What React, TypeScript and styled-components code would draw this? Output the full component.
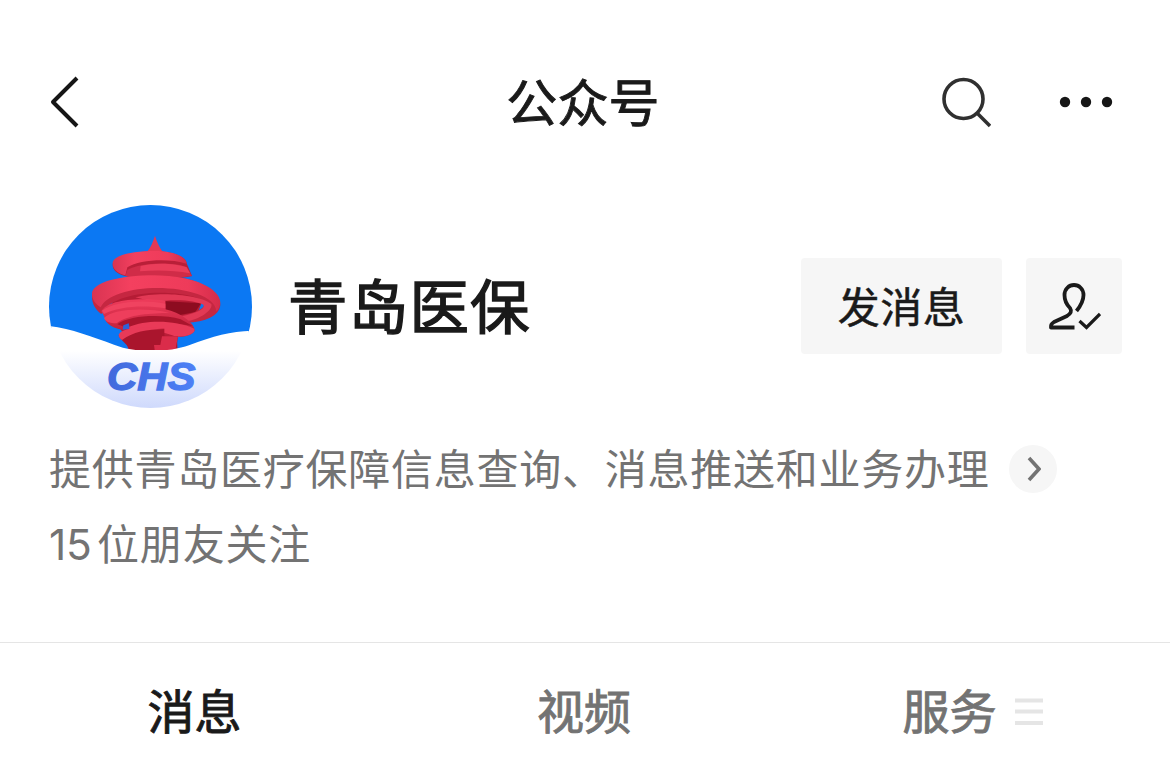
import React from "react";
import styled, { createGlobalStyle } from "styled-components";

const Global = createGlobalStyle`
  * { box-sizing: border-box; }
  body { margin: 0; background: #fff; font-family: "Noto Sans CJK SC", sans-serif; }
`;

const Page = styled.main`
  width: 1170px;
  height: 763px;
  overflow: hidden;
  background: #fff;
  display: flex;
  flex-direction: column;
`;

const NavBar = styled.header`
  height: 205px;
  flex: none;
  padding: 0 57px 2px 48px;
  display: grid;
  grid-template-columns: 1fr 152px 1fr;
  column-gap: 4px;
  align-items: center;
`;

const Label = styled.span<{ $size: number; $track?: number; $stroke?: number; $color?: string; $lift?: number }>`
  display: block;
  font-size: ${(p) => p.$size}px;
  line-height: 1.2;
  padding-bottom: ${(p) => (p.$lift ?? 0) * 2}px;
  letter-spacing: ${(p) => p.$track ?? 0}px;
  color: ${(p) => p.$color ?? "#1a1a1a"};
  -webkit-text-stroke: ${(p) => p.$stroke ?? 0}px currentColor;
  white-space: nowrap;
`;

const Title = styled.div`
  display: flex;
  justify-content: center;
  margin: 0 -8px 0 -3px;
`;

const Count = styled.span`
  font-family: Inter, "Liberation Sans", sans-serif;
  font-size: 42.5px;
  letter-spacing: -0.3px;
  margin-right: 5.5px;
`;

const NavActions = styled.div`
  display: flex;
  justify-content: flex-end;
  align-items: center;
  gap: 68px;
`;

const Icon = styled.svg`
  display: block;
  flex: none;
`;

const Profile = styled.section`
  height: 203px;
  flex: none;
  padding: 0 48px 0 49px;
  display: flex;
  align-items: center;
`;

const Name = styled.h1`
  margin: 0 auto 0 36px;
  font-weight: 400;
  display: flex;
`;

const Button = styled.button<{ $width: number }>`
  width: ${(p) => p.$width}px;
  height: 96px;
  margin: 0 0 2px 24px;
  padding: 0;
  border: 0;
  border-radius: 4px;
  background: #f6f6f6;
  font-family: inherit;
  display: flex;
  align-items: center;
  justify-content: center;
`;

const Details = styled.section`
  height: 234px;
  flex: none;
  padding: 24px 49px 0;
`;

const DetailRow = styled.div`
  height: 75px;
  display: flex;
  align-items: center;
`;

const More = styled.span`
  width: 48px;
  height: 48px;
  margin: 0 0 1px 19px;
  border-radius: 50%;
  background: #f6f6f6;
  display: flex;
  align-items: center;
  justify-content: center;
`;

const Tabs = styled.nav`
  flex: 1;
  border-top: 1px solid #e5e5e5;
  display: grid;
  grid-template-columns: 389px 390px 387px;
`;

const Tab = styled.div`
  height: 138px;
  display: flex;
  align-items: center;
  justify-content: center;
  gap: 18px;
`;

const Logo = () => (
  <Icon width="203" height="203" viewBox="27 30 609 609">
    <defs>
      <clipPath id="disc"><circle cx="331.5" cy="334.5" r="304.5" /></clipPath>
      <linearGradient id="snow" x1="0" y1="0" x2="0" y2="1">
        <stop offset="0.3" stopColor="#fff" />
        <stop offset="1" stopColor="#cdd8fc" />
      </linearGradient>
      <linearGradient id="band" x1="0" y1="0" x2="1" y2="0">
        <stop offset="0" stopColor="#d93452" />
        <stop offset="0.3" stopColor="#f4405f" />
        <stop offset="0.75" stopColor="#ee3b5a" />
        <stop offset="1" stopColor="#d42c4a" />
      </linearGradient>
      <linearGradient id="shade" x1="0" y1="0" x2="0" y2="1">
        <stop offset="0" stopColor="#ee3c5b" />
        <stop offset="1" stopColor="#b81c36" />
      </linearGradient>
      <linearGradient id="mark" x1="0" y1="0" x2="1" y2="0">
        <stop offset="0" stopColor="#4169dc" />
        <stop offset="1" stopColor="#4d80f6" />
      </linearGradient>
    </defs>
    <g clipPath="url(#disc)">
      <path d="M20 20H645V409L575 418L447 465H222L140 425L20 394Z" fill="#0b78f3" />
      <g transform="translate(138 105)">
        {/* spire and upper disc */}
        <path d="M207 17C212 34 221 54 231 67H182C194 53 201 36 207 17Z" fill="#e33955" />
        <path d="M80 104C80 80 138 64 207 64C264 64 302 82 302 100L318 138C270 150 160 150 118 138C94 132 80 120 80 104Z" fill="#b91f38" />
        <path d="M80 100C80 76 138 63 207 63C266 63 302 82 302 101C250 84 160 88 124 112L118 136C94 130 80 118 80 100Z" fill="url(#band)" />
        <path d="M124 120C160 98 256 94 302 111L318 138C260 148 160 148 118 138Z" fill="#d02c48" />
        <path d="M164 108C210 97 268 100 302 112L312 130C265 121 210 120 162 124Z" fill="#ea3d5a" />
        {/* core below the main ring */}
        <path d="M98 192L250 180L352 205L335 250L270 285L275 360H128L112 310L62 240Z" fill="#b51c35" />
        <path d="M238 214L345 220L328 246L278 256L240 240Z" fill="#8d0c20" />
        {/* main ring */}
        <path fillRule="evenodd" d="M18 200C18 163 98 136 206 136C326 136 403 178 403 224C401 258 356 276 303 278L276 258C330 250 358 234 354 221C346 200 290 188 222 188C146 188 80 208 58 236L46 252C30 240 18 222 18 200Z" fill="#c52741" />
        <path d="M18 192C18 158 98 136 206 136C326 136 403 178 403 218C402 228 398 238 391 244C389 199 302 174 214 174C132 174 60 196 44 232C28 222 18 208 18 192Z" fill="url(#band)" />
        <path d="M148 202C214 184 340 192 376 222C382 240 340 270 298 274L276 260C330 252 360 236 352 224C330 212 270 205 205 216Z" fill="#e23955" />
        {/* descending discs */}
        <path d="M46 244C62 212 146 200 238 212V238C282 248 326 278 326 302C318 316 292 322 270 320L128 300C86 302 56 280 56 262Z" fill="url(#shade)" />
        <path d="M48 242C82 216 170 208 238 221V235C170 224 96 230 54 252Z" fill="#f04360" />
        <path d="M54 264C80 235 180 232 250 248C198 250 126 252 92 280C70 280 58 274 54 264Z" fill="#ee3e5c" />
        <path d="M94 283C130 255 230 252 284 268L320 288C250 276 176 274 124 294Z" fill="#aa152d" />
        <path d="M112 286L128 280L132 296L110 299Z" fill="#2e62d6" />
        <path d="M130 290C176 270 266 268 325 296C330 310 306 320 270 320C230 300 160 300 130 304Z" fill="#e93a58" />
        <path d="M98 316C108 296 166 290 235 296V320L276 318L270 360H130C128 344 104 334 98 316Z" fill="#aa152d" />
        <path d="M98 314C106 294 174 286 236 297C182 298 140 306 108 330C102 326 98 320 98 314Z" fill="#e83a58" />
        <path d="M228 319H276L268 360H206L204 345H223Z" fill="#da2c4a" />
      </g>
      <path d="M20 392C96 401 150 423 222 449C294 477 391 471 447 451C524 421 575 409 645 407V645H20Z" fill="url(#snow)" />
      <text x="201" y="584" fontFamily="Liberation Sans, Arial, sans-serif" fontSize="119" fontWeight="700" fontStyle="italic" textLength="265" lengthAdjust="spacingAndGlyphs" fill="url(#mark)" stroke="url(#mark)" strokeWidth="4">CHS</text>
    </g>
  </Icon>
);

export default function App() {
  return (
    <>
      <Global />
      <Page>
        <NavBar>
          <Icon width="32" height="54" viewBox="0 0 32 54" fill="none" stroke="#161616" strokeWidth="4">
            <path d="M29 3L5 27L29 51" strokeLinejoin="round" />
          </Icon>
          <Title><Label $size={51} $track={0.2} $stroke={0.9} $lift={0.5}>公众号</Label></Title>
          <NavActions>
            <Icon width="52" height="52" viewBox="0 0 52 52" fill="none" stroke="#303030" strokeWidth="3.6">
              <circle cx="24.5" cy="23" r="19.5" />
              <path d="M38.5 37.5L51 50" />
            </Icon>
            <Icon width="54" height="12" viewBox="0 0 54 12" fill="#161616">
              <circle cx="6" cy="6" r="5.2" />
              <circle cx="27" cy="6" r="5.2" />
              <circle cx="48" cy="6" r="5.2" />
            </Icon>
          </NavActions>
        </NavBar>

        <Profile>
          <Logo />
          <Name><Label $size={59.5} $track={1.2} $stroke={1.4} $lift={2.5}>青岛医保</Label></Name>
          <Button $width={201}><Label $size={42} $track={0.5} $stroke={0.5} $lift={0.5}>发消息</Label></Button>
          <Button $width={96} aria-label="已关注">
            <Icon width="54" height="48" viewBox="0 0 54 48" fill="none" stroke="#1a1a1a" strokeWidth="3.8">
              <path d="M29.5 29C33.5 24 36.5 19 36.5 13C36.5 7 32 3 27 3C22 3 17.5 7 17.5 13C17.5 19 20 23 23 26C25.5 30 23 32 20 34L7 40C4 42 4 43 4 45.5H27.5" strokeLinejoin="round" />
              <path d="M32.5 39L39.5 45.5L53 32" strokeWidth="3.2" />
            </Icon>
          </Button>
        </Profile>

        <Details>
          <DetailRow>
            <Label $size={42} $track={0.75} $color="#737373" $lift={2}>提供青岛医疗保障信息查询、消息推送和业务办理</Label>
            <More>
              <Icon width="16" height="26" viewBox="0 0 16 26" fill="none" stroke="#737373" strokeWidth="3.6">
                <path d="M4 2L14 13L4 24" />
              </Icon>
            </More>
          </DetailRow>
          <DetailRow>
            <Label $size={42} $track={0.8} $color="#737373" $lift={1}><Count>15</Count>位朋友关注</Label>
          </DetailRow>
        </Details>

        <Tabs>
          <Tab><Label $size={47} $stroke={0.9} $lift={3}>消息</Label></Tab>
          <Tab><Label $size={47} $stroke={0.9} $color="#737373" $lift={3}>视频</Label></Tab>
          <Tab>
            <Label $size={47} $stroke={0.9} $color="#737373" $lift={3}>服务</Label>
            <Icon width="28" height="28" viewBox="0 0 28 28" fill="#e5e5e5">
              <rect y="0.5" width="28" height="4" />
              <rect y="11.5" width="28" height="4" />
              <rect y="23" width="28" height="4" />
            </Icon>
          </Tab>
        </Tabs>
      </Page>
    </>
  );
}
